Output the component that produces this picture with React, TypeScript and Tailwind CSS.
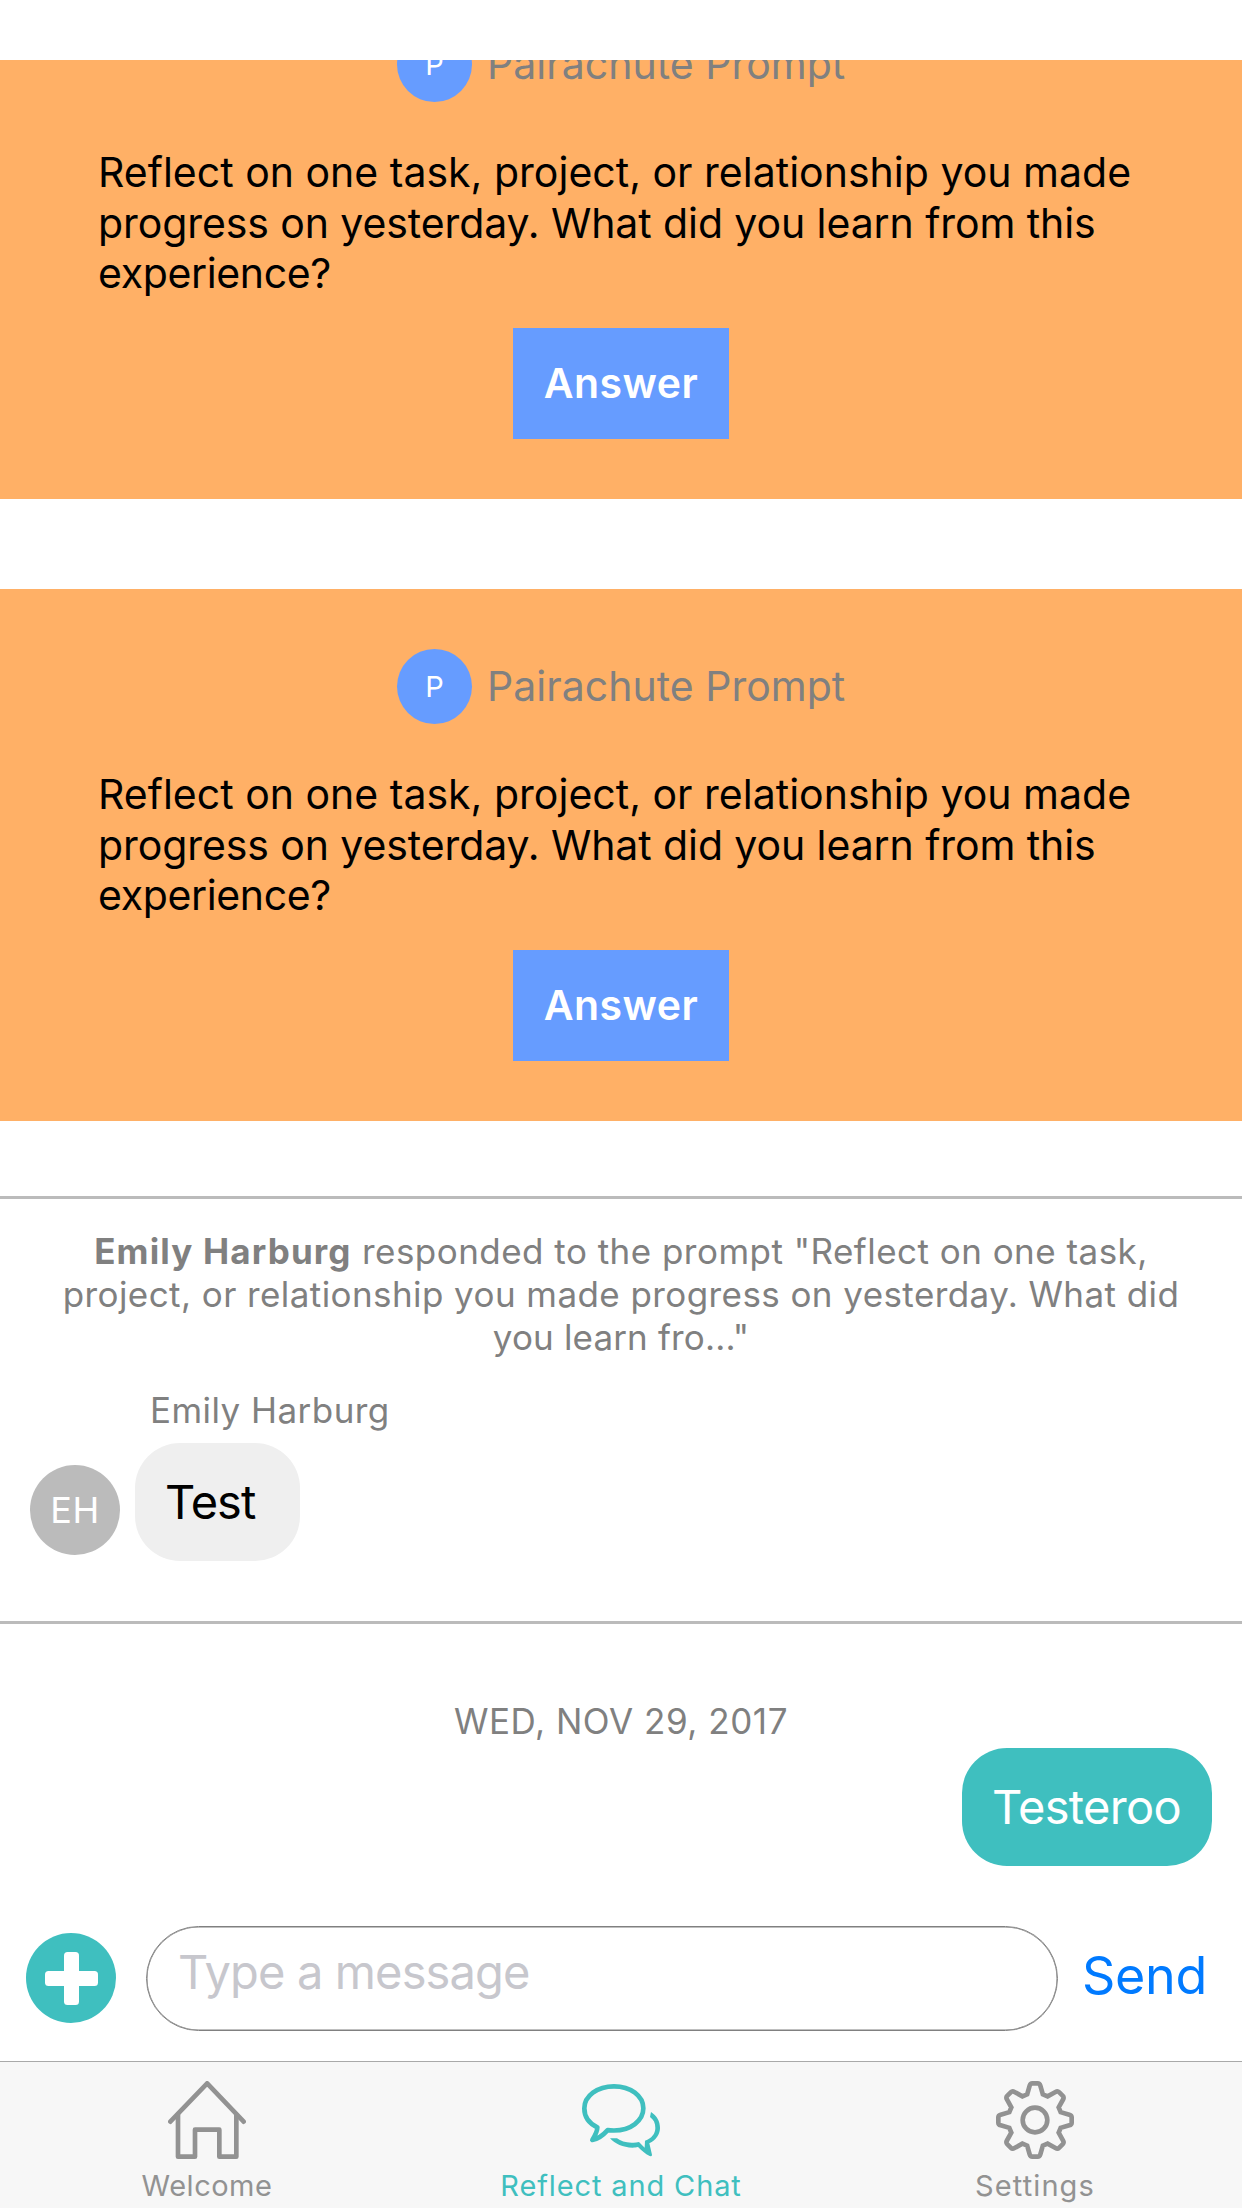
import React from "react";

function PromptCard() {
  return (
    <section className="h-[532px] w-full shrink-0 bg-[#ffb066] pt-[60px]">
      <div className="flex h-[75px] items-center pl-[397px]">
        <div className="flex size-[75px] items-center justify-center rounded-full bg-[#669cff] text-[29px] leading-none text-white">
          P
        </div>
        <div className="ml-[15px] pb-px text-[41px] leading-[50px] tracking-[0.02px] whitespace-nowrap text-[#808080]">
          Pairachute Prompt
        </div>
      </div>
      <p className="mt-[45px] h-[151px] pl-[98px] text-[41px] leading-[50.5px] whitespace-nowrap text-black">
        <span className="block tracking-[0.01px]">Reflect on one task, project, or relationship you made</span>
        <span className="block tracking-[-0.09px]">progress on yesterday. What did you learn from this</span>
        <span className="block tracking-[-0.35px]">experience?</span>
      </p>
      <button className="mx-auto mt-[30px] flex h-[111px] w-[216px] items-center justify-center bg-[#669cff] pb-px text-[41px] leading-none font-semibold tracking-[0.46px] text-white">
        Answer
      </button>
    </section>
  );
}

function HomeIcon() {
  return (
    <svg className="h-[78px] w-[78px]" viewBox="54 63 234 234" fill="none" stroke="#929292" strokeWidth="14" strokeLinecap="round" strokeLinejoin="round">
      <path d="M61 185 L171.500 70 L281 185" />
      <path d="M84 164 V290 H135 V209 H208 V290 H259 V164" />
    </svg>
  );
}

function ChatIcon() {
  return (
    <svg className="h-[73px] w-[78px]" viewBox="66 71 234 219" fill="none">
      <path
        d="M143 209.500 C150 210.500 155 210.500 162 210.500 C212 210.500 250 181 250 144 C250 107 212 78 162 78 C112 78 73 107 73 144 C73 170 88 190 112 201 C112 215 104 228 97 239 C114 236 130 224 143 209.500 Z"
        stroke="#3fbfbf"
        strokeWidth="14"
        strokeLinejoin="round"
      />
      <path
        d="M273 155 C290 166 300 182 300 203 C300 222 288 239 268 249 L276 283 Q276 289 269 287 C255 281 246 271 234 260 C228 261 224 262 218 262 C188 262 165 250 150 234 L171 234 C183 243 198 248 220 247 C226 247 231 246 237 245 L254 262 L255 241 C275 234 286 220 286 203 C286 188 281 178 270 170 Z"
        fill="#3fbfbf"
      />
    </svg>
  );
}

function GearIcon() {
  const tooth: [string, number[]][] = [
    ["L", [-23.5, -77]],
    ["L", [-16, -103]],
    ["Q", [-14, -110, -8, -110]],
    ["L", [8, -110]],
    ["Q", [14, -110, 16, -103]],
    ["L", [23.5, -77]],
  ];
  let d = "";
  for (let k = 0; k < 8; k++) {
    const c = Math.cos((k * Math.PI) / 4);
    const s = Math.sin((k * Math.PI) / 4);
    for (const [cmd, pts] of tooth) {
      const out: string[] = [];
      for (let i = 0; i < pts.length; i += 2) {
        out.push((pts[i] * c - pts[i + 1] * s).toFixed(2), (pts[i] * s + pts[i + 1] * c).toFixed(2));
      }
      d += (d === "" ? "M" : cmd) + out.join(" ") + " ";
    }
  }
  return (
    <svg className="h-[78px] w-[78px]" viewBox="-117 -117 234 234" fill="none" stroke="#929292" strokeWidth="14">
      <path d={d + "Z"} />
      <circle r="37" />
    </svg>
  );
}

function Tab({ icon, label, active, spacing }: { icon: React.ReactNode; label: string; active?: boolean; spacing: string }) {
  return (
    <div className={`flex flex-1 flex-col items-center ${active ? "text-[#3fbfbf]" : "text-[#929292]"}`}>
      <div className="flex h-[96px] items-center justify-center">{icon}</div>
      <div className={`text-[29px] leading-[35px] ${spacing}`}>{label}</div>
    </div>
  );
}

export default function App() {
  return (
    <div className="flex h-[2208px] w-[1242px] flex-col overflow-hidden bg-white pt-[60px] font-['Inter',sans-serif]">
      <div className="flex h-[439px] shrink-0 flex-col justify-end overflow-hidden">
        <PromptCard />
      </div>
      <div className="mt-[90px]">
        <PromptCard />
      </div>

      <section className="mt-[75px] h-[428px] shrink-0 border-y-[3px] border-[#bbbbbb] pt-[31px]">
        <p className="text-center text-[35px] leading-[43px] whitespace-nowrap text-[#808080]">
          <span className="block tracking-[0.47px]">
            <b className="font-bold tracking-[1.15px]">Emily Harburg</b> responded to the prompt "Reflect on one task,
          </span>
          <span className="block tracking-[0.42px]">
            project, or relationship you made progress on yesterday. What did
          </span>
          <span className="block tracking-[0.15px]">you learn fro..."</span>
        </p>
        <div className="mt-[30px] pl-[150px] text-[35px] leading-[43px] tracking-[0.45px] text-[#808080]">Emily Harburg</div>
        <div className="mt-[11px] flex h-[118px] pl-[30px]">
          <div className="mt-[22px] flex size-[90px] items-center justify-center rounded-full bg-[#bbbbbb] text-[36px] leading-none tracking-[0.6px] text-white">
            EH
          </div>
          <div className="ml-[15px] flex h-[118px] w-[165px] items-center rounded-[45px] bg-[#efefef] pb-[2px] pl-[30px] text-[47px] leading-none tracking-[-1px] text-black">
            Test
          </div>
        </div>
      </section>

      <div className="mt-[75.500px] h-[43px] text-center text-[35px] leading-[43px] tracking-[0.55px] text-[#808080]">
        WED, NOV 29, 2017
      </div>
      <div className="mt-[5.500px] flex justify-end pr-[30px]">
        <div className="flex h-[118px] w-[250px] items-center rounded-[45px] bg-[#3fbfbf] pb-[2px] pl-[30px] text-[47px] leading-none tracking-[-0.7px] text-white">
          Testeroo
        </div>
      </div>

      <div className="mt-[60px] flex h-[105px] shrink-0 items-center pl-[26px]">
        <div className="mb-px flex size-[90px] items-center justify-center rounded-full bg-[#3fbfbf]">
          <svg className="h-[53px] w-[53px]" viewBox="0 0 53 53" fill="#fff">
            <rect x="19" y="0" width="15" height="53" rx="3.500" />
            <rect x="0" y="19" width="53" height="15" rx="3.500" />
          </svg>
        </div>
        <div className="ml-[30px] flex h-[105px] w-[912px] items-center rounded-full border border-[#808080] pb-[14px] pl-[31px] text-[47px] leading-none tracking-[-0.86px] text-[#c7c7cd] shadow-[inset_0_0_0_0.5px_#808080]">
          Type a message
        </div>
        <div className="ml-[24px] pb-[6px] text-[52px] leading-none tracking-[-0.3px] text-[#007aff]">Send</div>
      </div>

      <nav className="mt-auto flex h-[147px] shrink-0 border-t border-[#a9a9a9] bg-[#f7f7f7] pt-[10px]">
        <Tab icon={<HomeIcon />} label="Welcome" spacing="tracking-[0.5px]" />
        <Tab icon={<ChatIcon />} label="Reflect and Chat" spacing="tracking-[0.87px]" active />
        <Tab icon={<GearIcon />} label="Settings" spacing="tracking-[1.1px]" />
      </nav>
    </div>
  );
}
